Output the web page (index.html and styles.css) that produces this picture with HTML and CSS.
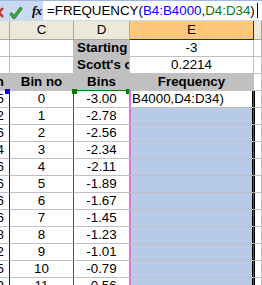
FILE: index.html
```html
<!DOCTYPE html>
<html>
<head>
<meta charset="utf-8">
<link rel="stylesheet" href="styles.css">
</head>
<body>
<div class="fbar">
  <div class="icons">
    <svg class="ico-x" width="6" height="20" viewBox="0 0 6 20"><path d="M-5 7 L3 16 M3 7 L-5 16" stroke="#c83020" stroke-width="2.4" fill="none"/></svg>
    <svg class="ico-ok" width="14" height="20" viewBox="0 0 14 20"><path d="M1.5 12 L5 16.5 L12.5 6.5" stroke="#1f7a1f" stroke-width="3.2" fill="none" stroke-linejoin="round"/><path d="M1.5 12 L5 16.5 L12.5 6.5" stroke="#3cb43c" stroke-width="1.6" fill="none" stroke-linejoin="round"/></svg>
    <span class="fx">fx</span>
  </div>
  <div class="finput"><span>=FREQUENCY(</span><span class="r1">B4:B4000</span><span>,</span><span class="r2">D4:D34</span><span>)</span><span class="caret"></span></div>
</div>
<div class="sheet">
  <div class="h hb"></div><div class="h">C</div><div class="h">D</div><div class="h hsel">E</div><div class="h hf"></div>

  <div class="c"></div><div class="c"></div><div class="c lbl">Starting</div><div class="c">-3</div><div class="c f"></div>
  <div class="c"></div><div class="c"></div><div class="c lbl">Scott's c</div><div class="c">0.2214</div><div class="c f"></div>
  <div class="c g bcol bh">Bin</div><div class="c g b">Bin no</div><div class="c g b dtop">Bins</div><div class="c g b">Frequency</div><div class="c f"></div>

  <div class="c bcol br">0.15</div><div class="c cr">0</div><div class="c dr">-3.00</div><div class="c e act">B4000,D4:D34)</div><div class="c f fs"></div>
  <div class="c bcol br">0.72</div><div class="c cr">1</div><div class="c dr">-2.78</div><div class="c e sel"></div><div class="c f fs"></div>
  <div class="c bcol br">1.06</div><div class="c cr">2</div><div class="c dr">-2.56</div><div class="c e sel"></div><div class="c f fs"></div>
  <div class="c bcol br">0.34</div><div class="c cr">3</div><div class="c dr">-2.34</div><div class="c e sel"></div><div class="c f fs"></div>
  <div class="c bcol br">1.96</div><div class="c cr">4</div><div class="c dr">-2.11</div><div class="c e sel"></div><div class="c f fs"></div>
  <div class="c bcol br">0.56</div><div class="c cr">5</div><div class="c dr">-1.89</div><div class="c e sel"></div><div class="c f fs"></div>
  <div class="c bcol br">0.26</div><div class="c cr">6</div><div class="c dr">-1.67</div><div class="c e sel"></div><div class="c f fs"></div>
  <div class="c bcol br">1.46</div><div class="c cr">7</div><div class="c dr">-1.45</div><div class="c e sel"></div><div class="c f fs"></div>
  <div class="c bcol br">0.38</div><div class="c cr">8</div><div class="c dr">-1.23</div><div class="c e sel"></div><div class="c f fs"></div>
  <div class="c bcol br">0.92</div><div class="c cr">9</div><div class="c dr">-1.01</div><div class="c e sel"></div><div class="c f fs"></div>
  <div class="c bcol br">1.15</div><div class="c cr">10</div><div class="c dr">-0.79</div><div class="c e sel"></div><div class="c f fs"></div>
  <div class="c bcol br">0.29</div><div class="c cr">11</div><div class="c dr">-0.56</div><div class="c e sel"></div><div class="c f fs"></div>

  <span class="hdl hdl-b"></span>
  <span class="hdl hdl-g1"></span>
  <span class="hdl hdl-g2"></span>
  <span class="hdl hdl-p"></span>
</div>
</body>
</html>
```
FILE: styles.css
```css
html, body {
  margin: 0;
  padding: 0;
}
body {
  width: 262px;
  height: 285px;
  overflow: hidden;
  background: #ffffff;
  font-family: "Liberation Sans", Arial, sans-serif;
  font-size: 13.33px;
  color: #000;
}
.fbar {
  height: 21px;
  display: flex;
  background: #c9d9f3;
  box-sizing: border-box;
  border-top: 1px solid #9db6de;
}
.icons {
  width: 43px;
  display: flex;
  align-items: flex-start;
  position: relative;
}
.ico-x { display: block; }
.ico-ok { display: block; margin-left: 3px; }
.fx {
  font-family: "Liberation Serif", serif;
  font-style: italic;
  font-weight: bold;
  font-size: 13px;
  line-height: 19px;
  margin-left: 9px;
  letter-spacing: -0.5px;
}
.finput {
  flex: 1;
  background: #ffffff;
  height: 19px;
  line-height: 19px;
  padding-left: 4px;
  white-space: nowrap;
  overflow: hidden;
  display: flex;
  align-items: center;
}
.r1 { color: #0000ff; }
.r2 { color: #008000; }
.caret {
  display: inline-block;
  width: 1px;
  height: 15px;
  background: #000;
  margin-left: 2px;
}
.sheet {
  position: relative;
  display: grid;
  grid-template-columns: 10px 64px 56px 124px 1fr;
  grid-template-rows: 19px;
  grid-auto-rows: 17px;
}
.h {
  box-sizing: border-box;
  background: #ece9d8;
  border-right: 1px solid #aca899;
  border-bottom: 1px solid #aca899;
  text-align: center;
  line-height: 18px;
  font-size: 13.33px;
}
.hsel {
  background: #ffc77b;
  border-bottom: 1px solid #1c2a78;
  border-right: 1px solid #1c2a78;
}
.c {
  box-sizing: border-box;
  border-right: 1px solid #c0c0c0;
  border-bottom: 1px solid #c0c0c0;
  white-space: nowrap;
  overflow: hidden;
  text-align: center;
  line-height: 16px;
}
.g { background: #c0c0c0; }
.b { font-weight: bold; }
.lbl {
  background: #c0c0c0;
  font-weight: bold;
  text-align: left;
  padding-left: 3px;
  text-overflow: clip;
}
.bcol {
  text-align: right;
  padding-right: 5px;
  direction: rtl;
}
.bh { font-weight: bold; }
.br { border-right: 1px solid #0000ff; }
.cr { border-right: 1px solid #008000; }
.dtop { border-bottom: 1px solid #008000; }
.dr { border-right: 1px solid #e070e0; }
.e {
  border-right: 1px solid #505050;
  box-shadow: inset -1px 0 0 #000, inset 1px 0 0 #e070e0;
  text-align: left;
  padding-left: 2px;
}
.sel { background: #b7cbe9; }
.act { background: #ffffff; }
.fs { box-shadow: inset 1px 0 0 #000; }
.hdl {
  position: absolute;
  width: 5px;
  height: 5px;
}
.hdl-b { left: 5px; top: 68px; background: #0000ff; }
.hdl-g1 { left: 72px; top: 68px; background: #008000; }
.hdl-g2 { left: 126px; top: 68px; width: 3px; background: #008000; }
.hdl-p { left: 129px; top: 68px; width: 2px; background: #e070e0; }
```
